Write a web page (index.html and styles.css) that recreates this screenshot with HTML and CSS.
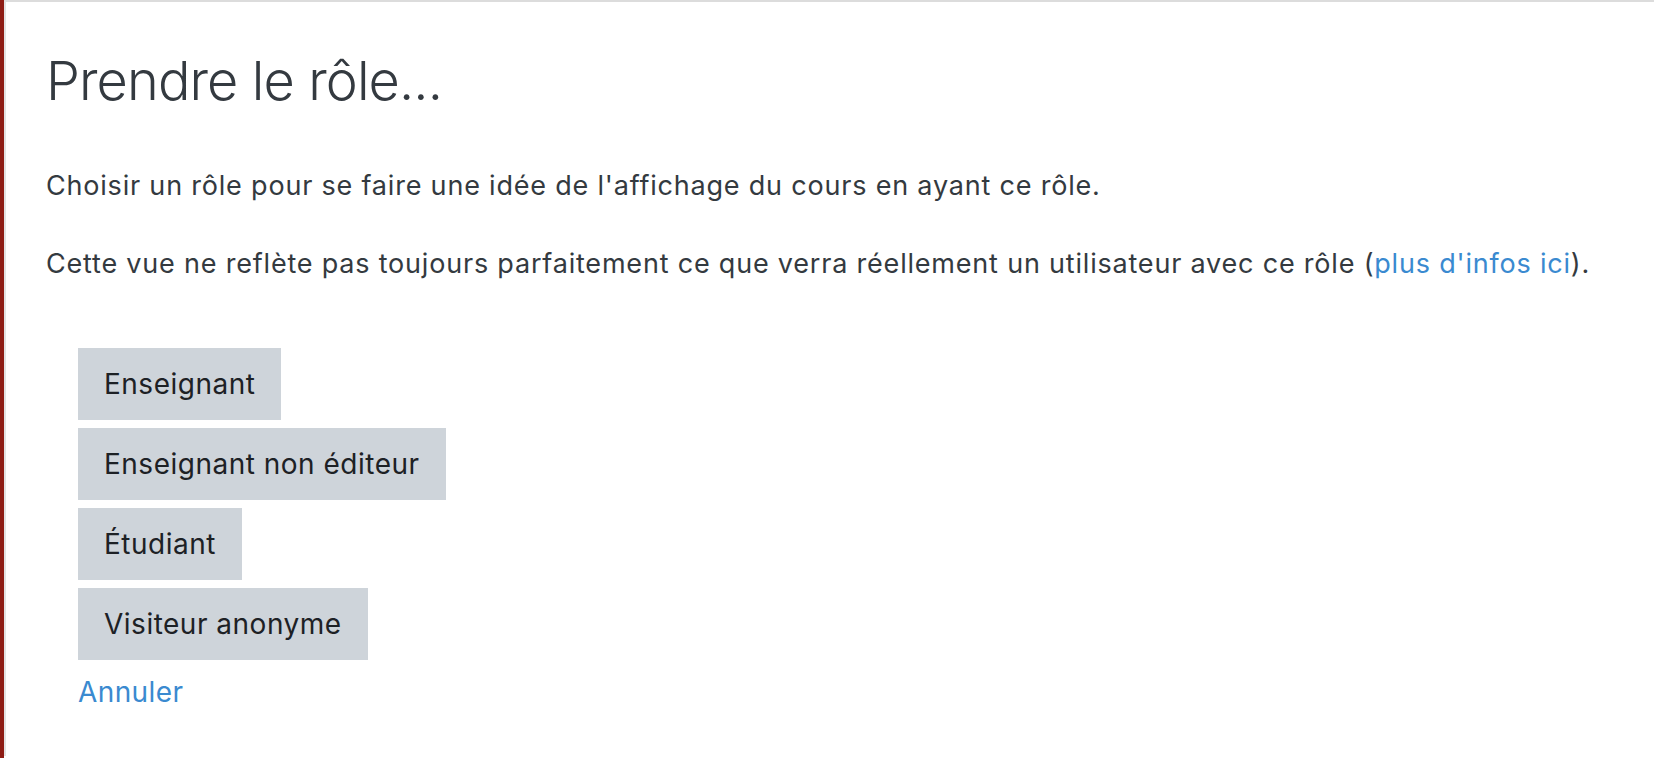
FILE: index.html
```html
<!DOCTYPE html>
<html lang="fr">
<head>
<meta charset="utf-8">
<title>Prendre le rôle...</title>
<link rel="stylesheet" href="styles.css">
</head>
<body>
<div class="frame">
  <div class="inner">
    <h1 class="title">Prendre le rôle...</h1>
    <p class="text">Choisir un rôle pour se faire une idée de l'affichage du cours en ayant ce rôle.</p>
    <p class="text">Cette vue ne reflète pas toujours parfaitement ce que verra réellement un utilisateur avec ce rôle (<a class="link" href="#">plus d'infos ici</a>).</p>
    <div class="roles">
      <button class="btn">Enseignant</button>
      <button class="btn">Enseignant non éditeur</button>
      <button class="btn">Étudiant</button>
      <button class="btn">Visiteur anonyme</button>
      <a class="link cancel" href="#">Annuler</a>
    </div>
  </div>
</div>
</body>
</html>
```
FILE: styles.css
```css
html, body {
  margin: 0;
  padding: 0;
  background: #fff;
}
body {
  font-family: Inter, "Noto Sans", sans-serif;
  color: #343a40;
}
.frame {
  border-left: 4px solid #8e1c14;
  min-height: 758px;
  box-sizing: border-box;
}
.inner {
  border-left: 2px solid #e2e2e2;
  border-top: 2px solid #dcdcdc;
  min-height: 756px;
  box-sizing: border-box;
  padding: 45px 0 0 40px;
}
.title {
  margin: 0;
  font-size: 54px;
  font-weight: 300;
  letter-spacing: -0.9px;
  line-height: 68px;
  color: #343a40;
}
.text {
  margin: 0;
  font-size: 27px;
  letter-spacing: 0.8px;
  line-height: 38px;
}
.title + .text {
  margin-top: 52px;
}
.text + .text {
  margin-top: 40px;
}
.link {
  color: #3a8ad0;
  text-decoration: none;
}
.roles {
  display: flex;
  flex-direction: column;
  align-items: flex-start;
  gap: 8px;
  margin-top: 65px;
  padding-left: 32px;
}
.btn {
  font-family: inherit;
  font-size: 28px;
  letter-spacing: 0.5px;
  line-height: 40px;
  color: #1d2125;
  background: #ced4da;
  border: 0;
  border-radius: 0;
  padding: 16px 26px;
  height: 72px;
}
.cancel {
  font-size: 28px;
  letter-spacing: 0.4px;
  line-height: 40px;
  margin-top: 4px;
}
```
